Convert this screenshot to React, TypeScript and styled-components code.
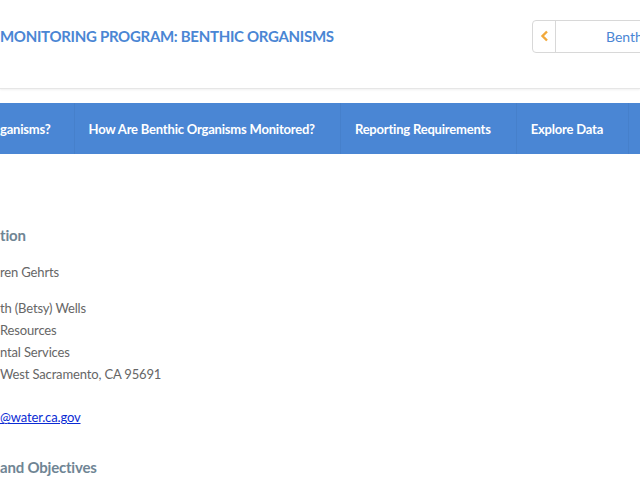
import styled, { createGlobalStyle } from 'styled-components'

const GlobalStyle = createGlobalStyle`
  html, body {
    margin: 0;
    padding: 0;
    background: #fff;
    overflow: hidden;
  }
  body {
    font-family: Lato, 'Open Sans', sans-serif;
  }
`

const Page = styled.div`
  width: 640px;
  height: 480px;
  overflow: hidden;
  background: #fff;
`

const Header = styled.header`
  height: 88px;
  display: flex;
  align-items: center;
  border-bottom: 1px solid #e6e6e6;
  box-shadow: 0 1px 2px #f0f0f0;
`

const Title = styled.h1`
  margin: 0 0 16px 0;
  font-size: 15px;
  letter-spacing: -0.3px;
  font-weight: 700;
  color: #4a86d4;
  white-space: nowrap;
`

const Selector = styled.div`
  margin: 0 -40px 16px auto;
  width: 146px;
  height: 31px;
  border: 1px solid #d8d8d8;
  border-radius: 4px;
  display: flex;
  align-items: stretch;
`

const SelectorArrow = styled.span`
  width: 22px;
  border-right: 1px solid #d8d8d8;
  display: flex;
  align-items: center;
  justify-content: center;
`

const SelectorLabel = styled.span`
  flex: 1;
  display: flex;
  align-items: center;
  padding-left: 50px;
  font-size: 14px;
  color: #4a86d4;
`

const Nav = styled.nav`
  margin-top: 14px;
  height: 51px;
  background: #4a86d4;
  display: flex;
  align-items: stretch;
`

const NavItem = styled.a<{ $first?: boolean }>`
  display: flex;
  align-items: center;
  padding: ${p => (p.$first ? '0 23px 0 0' : '0 25px 0 14px')};
  border-right: 1px solid #4680cb;
  color: #fff;
  font-size: 13px;
  letter-spacing: -0.2px;
  font-weight: 700;
  white-space: nowrap;
  text-decoration: none;
`

const Content = styled.main`
  padding-top: 72px;
`

const SectionTitle = styled.h2<{ $gap?: number }>`
  margin: ${p => p.$gap ?? 0}px 0 17px;
  font-size: 15px;
  letter-spacing: -0.2px;
  font-weight: 700;
  color: #6f8594;
  white-space: nowrap;
`

const Line = styled.p<{ $gap?: number }>`
  margin: 0;
  margin-top: ${p => p.$gap ?? 0}px;
  font-size: 13px;
  letter-spacing: -0.15px;
  line-height: 22px;
  color: #666;
  white-space: nowrap;
`

const MailLink = styled.a`
  color: #0b2bd4;
  text-decoration: underline;
`

const Chevron = () => (
  <svg width='9' height='12' viewBox='0 0 9 12'>
    <path d='M7 1.5 L2.5 6 L7 10.5' fill='none' stroke='#f2a93b' strokeWidth='2.4' />
  </svg>
)

const App = () => (
  <Page>
    <GlobalStyle />
    <Header>
      <Title>MONITORING PROGRAM: BENTHIC ORGANISMS</Title>
      <Selector>
        <SelectorArrow>
          <Chevron />
        </SelectorArrow>
        <SelectorLabel>Benthic</SelectorLabel>
      </Selector>
    </Header>
    <Nav>
      <NavItem $first>ganisms?</NavItem>
      <NavItem>How Are Benthic Organisms Monitored?</NavItem>
      <NavItem>Reporting Requirements</NavItem>
      <NavItem>Explore Data</NavItem>
    </Nav>
    <Content>
      <SectionTitle>tion</SectionTitle>
      <Line>ren Gehrts</Line>
      <Line $gap={14}>th (Betsy) Wells</Line>
      <Line>Resources</Line>
      <Line>ntal Services</Line>
      <Line>West Sacramento, CA 95691</Line>
      <Line $gap={21}>
        <MailLink href='#'>@water.ca.gov</MailLink>
      </Line>
      <SectionTitle $gap={30}>and Objectives</SectionTitle>
    </Content>
  </Page>
)

export default App
